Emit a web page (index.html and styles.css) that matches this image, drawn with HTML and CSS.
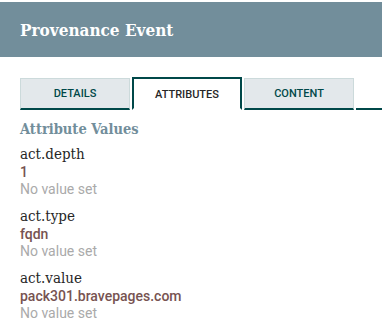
FILE: index.html
```html
<!DOCTYPE html>
<html lang="en">
<head>
    <meta charset="UTF-8">
    <title>Provenance Event</title>
    <link rel="stylesheet" href="styles.css">
</head>
<body>
    <div class="dialog">
        <div class="dialog-header">
            <h1>Provenance Event</h1>
        </div>
        <div class="dialog-content">
            <div class="tabs">
                <div class="tab">DETAILS</div>
                <div class="tab selected">ATTRIBUTES</div>
                <div class="tab">CONTENT</div>
                <div class="tab-rest"></div>
            </div>
            <div class="tab-body">
                <h2>Attribute Values</h2>
                <div class="attribute">
                    <div class="attr-name">act.depth</div>
                    <div class="attr-value">1</div>
                    <div class="attr-previous">No value set</div>
                </div>
                <div class="attribute">
                    <div class="attr-name">act.type</div>
                    <div class="attr-value">fqdn</div>
                    <div class="attr-previous">No value set</div>
                </div>
                <div class="attribute">
                    <div class="attr-name">act.value</div>
                    <div class="attr-value">pack301.bravepages.com</div>
                    <div class="attr-previous">No value set</div>
                </div>
            </div>
        </div>
    </div>
</body>
</html>
```
FILE: styles.css
```css
body {
    margin: 0;
    padding: 0;
    background: #fff;
    font-family: Roboto, Arial, sans-serif;
    overflow: hidden;
}
.dialog {
    padding-top: 2px;
}
.dialog-header {
    background: #728e9b;
    height: 55px;
    display: flex;
    align-items: center;
    padding-left: 20px;
}
.dialog-header h1 {
    margin: 0;
    color: #fff;
    font-family: "DejaVu Serif Condensed", "DejaVu Serif", serif;
    font-weight: bold;
    font-size: 17px;
}
.dialog-content {
    padding: 20px 0 0 20px;
}
.tabs {
    display: flex;
    align-items: flex-end;
    height: 33px;
}
.tab {
    width: 110px;
    height: 32px;
    box-sizing: border-box;
    margin-right: 2px;
    background: #e3e8eb;
    border: 1px solid #ccdadb;
    border-bottom: 2px solid #004849;
    display: flex;
    align-items: center;
    justify-content: center;
    font-size: 11px;
    font-weight: 500;
    color: #004849;
}
.tab.selected {
    height: 33px;
    background: #fff;
    border: 2px solid #004849;
    border-bottom: 2px solid #fff;
    color: #262626;
    padding-top: 2px;
}
.tab-rest {
    flex: 1;
    border-bottom: 2px solid #004849;
}
.tab-body h2 {
    margin: 10px 0 8px;
    font-family: "DejaVu Serif Condensed", "DejaVu Serif", serif;
    font-weight: bold;
    font-size: 14.5px;
    color: #728e9b;
}
.attribute {
    margin-bottom: 9px;
}
.attr-name {
    font-family: "DejaVu Serif Condensed", "DejaVu Serif", serif;
    font-size: 15px;
    line-height: 18px;
    color: #262626;
}
.attr-value {
    font-size: 14px;
    line-height: 18px;
    font-weight: 500;
    color: #775351;
}
.attr-previous {
    font-size: 14px;
    line-height: 17px;
    color: #aaa;
}
```
